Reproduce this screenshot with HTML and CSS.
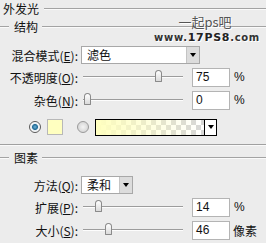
FILE: index.html
```html
<!DOCTYPE html>
<html>
<head>
<meta charset="utf-8">
<link rel="stylesheet" href="styles.css">
</head>
<body>
<div class="panel">
  <div class="title-row"><span class="title">外发光</span><span class="rule"></span></div>
  <div class="group-row"><span class="lead"></span><span class="gtitle">结构</span><span class="rule"></span></div>

  <div class="row r1">
    <span class="lbl">混合模式(<u>E</u>):</span>
    <div class="select sel-wide"><span class="val">滤色</span><span class="arrow"><i></i></span></div>
  </div>
  <div class="row r2">
    <span class="lbl">不透明度(<u>O</u>):</span>
    <div class="slider"><span class="track"></span><span class="thumb" style="left:72px"></span></div>
    <div class="field">75</div><span class="unit">%</span>
  </div>
  <div class="row r3">
    <span class="lbl">杂色(<u>N</u>):</span>
    <div class="slider"><span class="track"></span><span class="thumb" style="left:1px"></span></div>
    <div class="field">0</div><span class="unit">%</span>
  </div>
  <div class="row r4">
    <span class="radio on"></span>
    <span class="swatch"></span>
    <span class="radio off"></span>
    <div class="gradient"><span class="gfill"></span><span class="garrow"><i></i></span></div>
  </div>

  <div class="sep"></div>

  <div class="group-row g2"><span class="lead"></span><span class="gtitle">图素</span><span class="rule"></span></div>
  <div class="row r5">
    <span class="lbl">方法(<u>Q</u>):</span>
    <div class="select sel-small"><span class="val">柔和</span><span class="arrow"><i></i></span></div>
  </div>
  <div class="row r6">
    <span class="lbl">扩展(<u>P</u>):</span>
    <div class="slider"><span class="track"></span><span class="thumb" style="left:12px"></span></div>
    <div class="field">14</div><span class="unit">%</span>
  </div>
  <div class="row r7">
    <span class="lbl">大小(<u>S</u>):</span>
    <div class="slider"><span class="track"></span><span class="thumb" style="left:22px"></span></div>
    <div class="field">46</div><span class="unit cjk">像素</span>
  </div>

  <div class="watermark">
    <div class="wm1">一起ps吧</div>
    <div class="wm2">www.<b>17PS8</b>.com</div>
  </div>
</div>
</body>
</html>
```
FILE: styles.css
```css
html, body {
  margin: 0;
  padding: 0;
  background: #ececec;
}
body {
  width: 266px;
  height: 243px;
  overflow: hidden;
  font-family: "Noto Sans CJK SC", "Liberation Sans", sans-serif;
  font-size: 12px;
  color: #111;
}
.panel {
  position: relative;
  width: 266px;
  height: 243px;
}
u { text-decoration: underline; text-underline-offset: 1px; }

.title-row, .group-row {
  display: flex;
  align-items: center;
  height: 18px;
  line-height: 18px;
}
.title { margin-left: 3px; }
.rule, .lead {
  height: 0;
  border-top: 1px solid #a3a3a3;
  border-bottom: 1px solid #fafafa;
}
.title-row .rule { flex: 1; margin-left: 5px; }
.lead { width: 9px; }
.gtitle { margin-left: 5px; }
.group-row .rule { flex: 1; margin-left: 4px; }

.row {
  display: flex;
  align-items: center;
  height: 20px;
}
.lbl {
  width: 78px;
  text-align: right;
  white-space: nowrap;
  flex: none;
}
.r1 { margin-top: 10px; height: 18px; }
.r2 { margin-top: 3px; }
.r3 { margin-top: 3px; }
.r4 { margin-top: 7px; }

.select {
  display: flex;
  height: 18px;
  box-sizing: border-box;
  margin-left: 3px;
  border: 1px solid #a8a8a8;
  background: #fff;
}
.sel-wide { width: 119px; }
.sel-small { width: 52px; }
.select .val {
  flex: 1;
  padding-left: 5px;
  line-height: 16px;
}
.select .arrow {
  width: 12px;
  background: #dcdcdc;
  border-left: 1px solid #c4c4c4;
  display: flex;
  align-items: center;
  justify-content: center;
}
.arrow i, .garrow i {
  width: 0;
  height: 0;
  border-left: 3px solid transparent;
  border-right: 3px solid transparent;
  border-top: 4px solid #000;
}

.slider {
  position: relative;
  width: 100px;
  height: 16px;
  margin-left: 5px;
  flex: none;
}
.track {
  position: absolute;
  left: 0;
  right: 0;
  top: 7px;
  height: 0;
  border-top: 1px solid #9c9c9c;
  border-bottom: 1px solid #fdfdfd;
}
.thumb {
  position: absolute;
  top: 1px;
  width: 7px;
  height: 12px;
  box-sizing: border-box;
  border: 1px solid #8a8a8a;
  border-radius: 4px 4px 1px 1px;
  background: linear-gradient(#ffffff, #dadada);
}
.field {
  width: 38px;
  height: 19px;
  box-sizing: border-box;
  margin-left: 9px;
  border: 1px solid #b4b4b4;
  background: #fff;
  font-family: "Liberation Sans", sans-serif;
  font-size: 12px;
  line-height: 17px;
  padding-left: 3px;
}
.unit {
  margin-left: 4px;
  font-family: "Liberation Sans", sans-serif;
}
.unit.cjk { font-family: "Noto Sans CJK SC", sans-serif; margin-left: 3px; }

.radio {
  width: 12px;
  height: 12px;
  box-sizing: border-box;
  border-radius: 50%;
  flex: none;
}
.radio.on {
  margin-left: 29px;
  border: 1px solid #5a5a5a;
  background: radial-gradient(circle at 50% 50%, #6fb1d6 0, #1f6a96 2.5px, #e8eef2 3.5px, #ffffff 5px);
}
.radio.off {
  margin-left: 14px;
  border: 1px solid #9a9a9a;
  background: radial-gradient(circle at 50% 50%, #f4f4f4 0, #d8d8d8 5px);
}
.swatch {
  width: 16px;
  height: 16px;
  box-sizing: border-box;
  margin-left: 6px;
  border: 1px solid #b8b8b8;
  background: #ffffc0;
}
.gradient {
  display: flex;
  width: 122px;
  height: 17px;
  box-sizing: border-box;
  margin-left: 6px;
  border: 1px solid #000;
}
.gfill {
  flex: 1;
  background:
    linear-gradient(to right, #ffffbf, rgba(255, 255, 191, 0)),
    conic-gradient(#d6d6d6 25%, #fff 0 50%, #d6d6d6 0 75%, #fff 0) 0 0 / 10px 10px;
}
.garrow {
  width: 11px;
  background: #fff;
  border-left: 1px solid #000;
  display: flex;
  align-items: center;
  justify-content: center;
}

.sep {
  margin-top: 7px;
  height: 0;
  border-top: 1px solid #a0a0a0;
  border-bottom: 1px solid #fafafa;
}
.g2 { margin-top: 3px; }
.r5 { margin-top: 9px; height: 18px; }
.r6 { margin-top: 3px; }
.r7 { margin-top: 3px; }

.watermark {
  position: absolute;
  left: 154px;
  top: 15px;
  width: 100px;
  text-align: center;
}
.wm1 {
  font-size: 13px;
  line-height: 14px;
  height: 14px;
  color: #555;
  text-shadow: 1px 1px 0 #fff;
  padding-left: 2px;
}
.wm2 {
  margin-top: 4px;
  font-family: "DejaVu Sans", sans-serif;
  font-weight: bold;
  font-size: 10px;
  line-height: 10px;
  color: #333;
  letter-spacing: 0.7px;
  text-shadow: 1px 1px 0 #fff;
  white-space: nowrap;
}
.wm2 b {
  font-size: 11px;
  color: #222;
}
```
